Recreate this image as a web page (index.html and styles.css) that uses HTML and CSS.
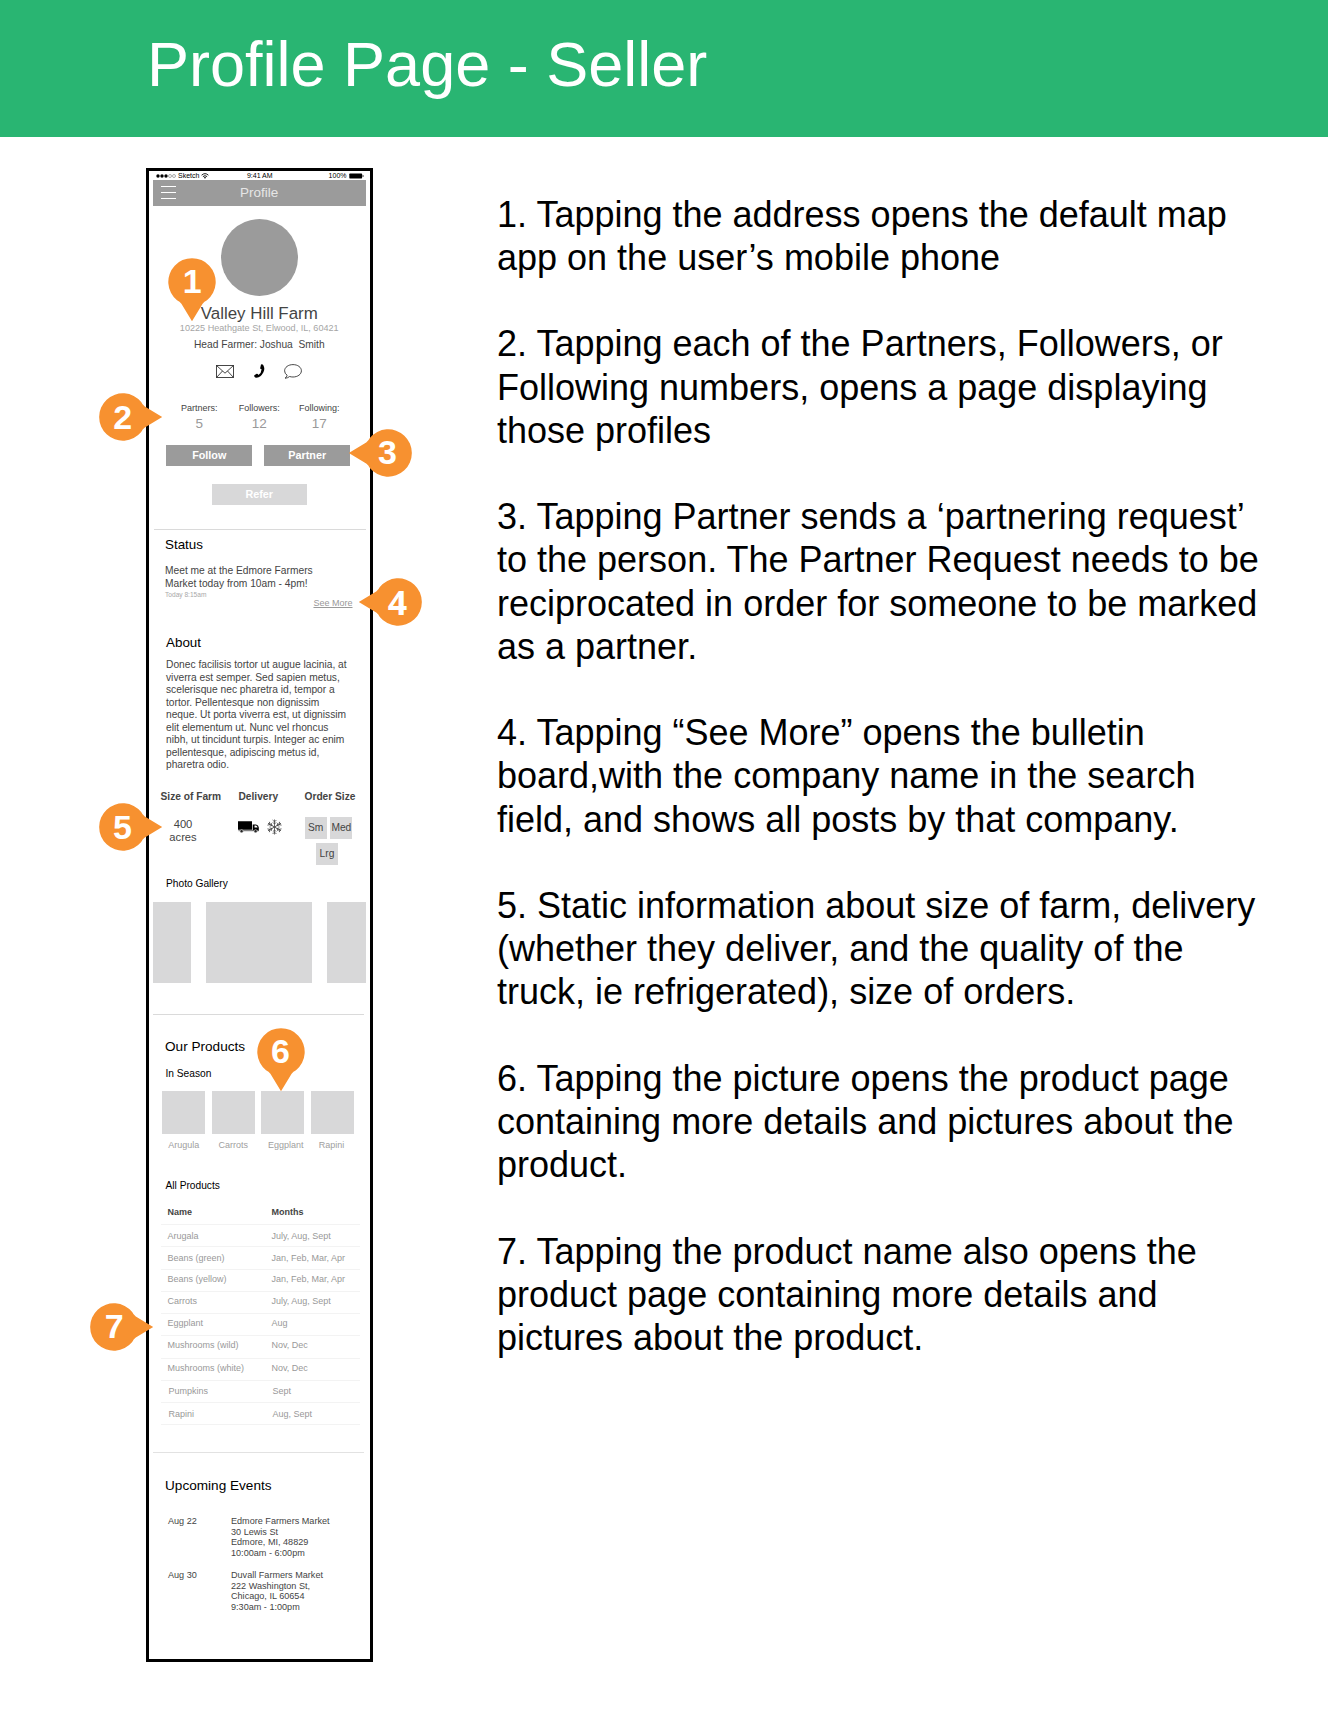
FILE: index.html
```html
<!DOCTYPE html>
<html lang="en">
<head>
<meta charset="utf-8">
<title>Profile Page - Seller</title>
<link rel="stylesheet" href="styles.css">
</head>
<body>
<svg class="defs" width="0" height="0" aria-hidden="true">
  <symbol id="pin" viewBox="-24 -24 48 64">
    <path d="M0 39.2 L-10.6 21.8 Q-12.2 19.4 -15 18.2 A23.7 23.7 0 1 1 15 18.2 Q12.2 19.4 10.6 21.8 Z"/>
  </symbol>
</svg>

<header class="banner"><h1>Profile Page - Seller</h1></header>

<main class="board">
  <section class="phone">
    <div class="statusbar">
      <span class="carrier">
        <svg class="dots" viewBox="0 0 20 4"><circle cx="2" cy="2" r="1.7"/><circle cx="6" cy="2" r="1.7"/><circle cx="10" cy="2" r="1.7"/><g fill="none" stroke="#333" stroke-width=".4"><circle cx="14" cy="2" r="1.5"/><circle cx="18" cy="2" r="1.5"/></g></svg>
        Sketch
        <svg class="wifi" viewBox="0 0 8 6"><path d="M.6 2.2Q4-.9 7.4 2.2M1.9 3.6Q4 1.8 6.1 3.6" fill="none" stroke="#000" stroke-width=".9"/><path d="M2.900 4.500Q4 3.600 5.100 4.500L4 5.700Z"/></svg>
      </span>
      <span>9:41 AM</span>
      <span class="power">100%
        <svg class="battery" viewBox="0 0 15 6"><rect x=".3" y=".6" width="12.800" height="4.800" rx=".6"/><path d="M13.600 2q1 .2 1 1t-1 1z"/></svg>
      </span>
    </div>
    <nav class="navbar">
      <span class="menu"><i></i><i></i><i></i></span>
      <span>Profile</span>
    </nav>

    <div class="profile">
      <div class="avatar"></div>
      <h2 class="farm">Valley Hill Farm</h2>
      <p class="address">10225 Heathgate St, Elwood, IL, 60421</p>
      <p class="farmer">Head Farmer: Joshua&nbsp; Smith</p>
      <div class="contact">
        <svg width="18" height="13" viewBox="0 0 18 13" fill="none" stroke="#333" stroke-width=".9"><rect x=".5" y=".5" width="17" height="12"/><path d="M.5 .5L9 8.2L17.500 .5M.5 12.500L6.500 6M17.500 12.500L11.500 6"/></svg>
        <svg width="11" height="15" viewBox="0 0 11 15"><path d="M7 .6Q8.200 -.1 9.200 .9Q11.400 4.600 9.300 8.500Q6.800 13.200 2.600 13.700Q.9 13.700 .2 12.200Q-.1 11.400 .7 10.900L2.700 9.800Q3.500 9.500 4 10.300L4.400 10.900Q7.400 9 7.600 5.200L6.900 5Q6.100 4.800 6.200 4Z"/></svg>
        <svg width="18" height="15" viewBox="0 0 18 15" fill="none" stroke="#333" stroke-width=".9"><path d="M1 14.200Q2.900 13.200 3.100 11.200Q.6 9.500 .6 6.800C.6 3.300 4.300 .6 9 .6S17.400 3.300 17.400 6.800S13.700 13 9 13Q7.200 13 5.600 12.500Q3.700 14.100 1 14.200Z"/></svg>
      </div>
      <dl class="stats">
        <div><dt>Partners:</dt><dd>5</dd></div>
        <div><dt>Followers:</dt><dd>12</dd></div>
        <div><dt>Following:</dt><dd>17</dd></div>
      </dl>
      <div class="actions"><button>Follow</button><button>Partner</button></div>
      <button class="refer">Refer</button>
    </div>

    <div class="rule"></div>

    <div class="status">
      <h3>Status</h3>
      <p class="post">Meet me at the Edmore Farmers<br>Market today from 10am - 4pm!</p>
      <p class="time">Today 8:15am</p>
      <a class="more">See More</a>
    </div>

    <div class="about">
      <h3>About</h3>
      <p>Donec facilisis tortor ut augue lacinia, at<br>viverra est semper. Sed sapien metus,<br>scelerisque nec pharetra id, tempor a<br>tortor. Pellentesque non dignissim<br>neque. Ut porta viverra est, ut dignissim<br>elit elementum ut. Nunc vel rhoncus<br>nibh, ut tincidunt turpis. Integer ac enim<br>pellentesque, adipiscing metus id,<br>pharetra odio.</p>
    </div>

    <div class="facts">
      <div class="size"><h4>Size of Farm</h4><p>400<br>acres</p></div>
      <div class="delivery"><h4>Delivery</h4>
        <div class="vehicles">
          <svg width="21" height="12" viewBox="0 0 21 12"><path d="M0 .3H14V8.800H0ZM14.700 3.500H18Q20.600 4 20.800 6.500V10H14.700Z"/><path d="M.5 9.200H20.800V10.200H.5Z" fill="#666"/><path d="M16.500 4.600H18Q19.300 5 19.600 6.500H16.500Z" fill="#fff"/><g fill="#222" stroke="#fff" stroke-width=".5"><circle cx="3.600" cy="10.200" r="1.600"/><circle cx="17.600" cy="10.200" r="1.600"/></g></svg>
          <svg width="15" height="16" viewBox="-7.500 -8 15 16" fill="none" stroke="#444" stroke-width=".8"><g id="arm"><path d="M0 0V-7.500M-1.900 -7L0 -5.100L1.900 -7M-1.700 -4.700L0 -3L1.700 -4.700"/></g><use href="#arm" transform="rotate(60)"/><use href="#arm" transform="rotate(120)"/><use href="#arm" transform="rotate(180)"/><use href="#arm" transform="rotate(240)"/><use href="#arm" transform="rotate(300)"/></svg>
        </div>
      </div>
      <div class="orders"><h4>Order Size</h4>
        <div class="sizes"><span>Sm</span><span>Med</span><span>Lrg</span></div>
      </div>
    </div>

    <h4 class="gallery-title">Photo Gallery</h4>
    <div class="gallery"><i></i><i></i><i></i></div>

    <div class="rule rule-left"></div>

    <div class="products">
      <h3>Our Products</h3>
      <h4>In Season</h4>
      <div class="season">
        <figure><i></i><figcaption>Arugula</figcaption></figure>
        <figure><i></i><figcaption>Carrots</figcaption></figure>
        <figure><i></i><figcaption>Eggplant</figcaption></figure>
        <figure><i></i><figcaption>Rapini</figcaption></figure>
      </div>
      <h4 class="all">All Products</h4>
      <div class="table">
        <div class="head"><b>Name</b><b>Months</b></div>
        <div class="row low"><span>Arugala</span><span>July, Aug, Sept</span></div>
        <div class="row low"><span>Beans (green)</span><span>Jan, Feb, Mar, Apr</span></div>
        <div class="row"><span>Beans (yellow)</span><span>Jan, Feb, Mar, Apr</span></div>
        <div class="row"><span>Carrots</span><span>July, Aug, Sept</span></div>
        <div class="row"><span>Eggplant</span><span>Aug</span></div>
        <div class="row"><span>Mushrooms (wild)</span><span>Nov, Dec</span></div>
        <div class="row"><span>Mushrooms (white)</span><span>Nov, Dec</span></div>
        <div class="row inset low"><span>Pumpkins</span><span>Sept</span></div>
        <div class="row inset low"><span>Rapini</span><span>Aug, Sept</span></div>
      </div>
    </div>

    <div class="rule rule-left rule-events"></div>

    <div class="events">
      <h3>Upcoming Events</h3>
      <div class="event"><span>Aug 22</span><p>Edmore Farmers Market<br>30 Lewis St<br>Edmore, MI, 48829<br>10:00am - 6:00pm</p></div>
      <div class="event"><span>Aug 30</span><p>Duvall Farmers Market<br>222 Washington St,<br>Chicago, IL 60654<br>9:30am - 1:00pm</p></div>
    </div>
  </section>

  <section class="notes">
    <p>1. Tapping the address opens the default map<br>app on the user’s mobile phone</p>
    <p>2. Tapping each of the Partners, Followers, or<br>Following numbers, opens a page displaying<br>those profiles</p>
    <p>3. Tapping Partner sends a ‘partnering request’<br>to the person. The Partner Request needs to be<br>reciprocated in order for someone to be marked<br>as a partner.</p>
    <p>4. Tapping “See More” opens the bulletin<br>board,with the company name in the search<br>field, and shows all posts by that company.</p>
    <p>5. Static information about size of farm, delivery<br>(whether they deliver, and the quality of the<br>truck, ie refrigerated), size of orders.</p>
    <p>6. Tapping the picture opens the product page<br>containing more details and pictures about the<br>product.</p>
    <p>7. Tapping the product name also opens the<br>product page containing more details and<br>pictures about the product.</p>
  </section>
</main>

<div class="pin down p1"><svg><use href="#pin"/></svg><b>1</b></div>
<div class="pin right p2"><svg><use href="#pin"/></svg><b>2</b></div>
<div class="pin left p3"><svg><use href="#pin"/></svg><b>3</b></div>
<div class="pin left p4"><svg><use href="#pin"/></svg><b>4</b></div>
<div class="pin right p5"><svg><use href="#pin"/></svg><b>5</b></div>
<div class="pin down p6"><svg><use href="#pin"/></svg><b>6</b></div>
<div class="pin right p7"><svg><use href="#pin"/></svg><b>7</b></div>
</body>
</html>
```
FILE: styles.css
```css
* { box-sizing: border-box; margin: 0; padding: 0; }
body {
  position: relative;
  width: 1328px;
  height: 1713px;
  overflow: hidden;
  background: #fff;
  font-family: "Liberation Sans", Arial, Helvetica, sans-serif;
  color: #444;
}
h1, h2, h3, h4 { font-weight: 400; }
svg { display: block; }
.defs { position: absolute; }

.banner { height: 137px; padding: 26px 0 0 147px; background: #29b572; }
.banner h1 { font-size: 63px; line-height: 76px; color: #fff; }

.board { display: flex; align-items: flex-start; padding: 31px 0 0 146px; }
.phone { width: 226.500px; height: 1494px; border: 3px solid #000; font-size: 10.220px; }

/* phone chrome */
.statusbar {
  display: grid; grid-template-columns: 1fr auto 1fr;
  height: 9px; padding: 0 6px 0 7px; font-size: 7px; line-height: 9px; color: #000;
}
.carrier, .power { display: flex; align-items: center; gap: 2px; }
.power { justify-content: flex-end; }
.dots { width: 20px; height: 4px; }
.wifi { width: 8px; height: 6px; }
.battery { width: 15px; height: 6px; }
.navbar {
  display: grid; grid-template-columns: 1fr auto 1fr;
  height: 25.500px; margin: 0 4px; padding-left: 8px; padding-right: 8px;
  background: #9b9b9b; color: #e6e6e6; font-size: 13.500px; line-height: 25.500px;
}
.menu { display: flex; flex-direction: column; gap: 5px; width: 15px; padding-top: 6px; }
.menu i { height: 1px; background: #fff; }

/* profile */
.profile { display: flex; flex-direction: column; align-items: center; padding-top: 13.500px; }
.avatar { width: 77px; height: 77px; border-radius: 50%; background: #9b9b9b; }
.farm { margin-top: 9px; font-size: 16.900px; line-height: 18px; }
.address { margin-top: -1px; font-size: 9.100px; line-height: 12px; color: #a5a5a5; }
.farmer { margin-top: 5px; line-height: 12px; }
.contact { display: flex; align-items: center; gap: 19.500px; height: 16px; margin-top: 12px; }
.stats { display: grid; grid-template-columns: repeat(3, 60px); margin-top: 23px; text-align: center; }
.stats dt { font-size: 9px; line-height: 12px; }
.stats dd { margin-top: 2px; font-size: 13.500px; line-height: 16px; color: #999; }
button { border: 0; background: #9b9b9b; color: #fff; font: bold 10.800px/21px "Liberation Sans", Arial, sans-serif; height: 21px; }
.actions { display: flex; gap: 12px; margin-top: 13px; margin-right: 2px; }
.actions button { width: 86px; }
.refer { width: 95px; margin-top: 18px; background: #d8d8d9; }

.rule { height: 1px; margin: 24px 4px 0 5px; background: #dadada; }
.rule-left { margin: 31px 6px 0 4px; }
.rule-events { margin-top: 27px; background: #e2e2e2; }

h3 { font-size: 13.400px; line-height: 16px; color: #000; }
h4 { font-size: 10.200px; line-height: 12px; color: #000; }

/* status and about */
.status { display: flex; flex-direction: column; padding: 7px 17px 0 16px; }
.post { margin-top: 12px; line-height: 12.500px; }
.time { margin-top: 1px; font-size: 6.600px; line-height: 7px; color: #a8a8a8; }
.more { align-self: flex-end; font-size: 9px; line-height: 10px; color: #999; text-decoration: underline; }
.about { padding: 27px 0 0 17px; white-space: nowrap; }
.about p { margin-top: 8px; line-height: 12.500px; }

/* farm facts */
.facts { display: grid; grid-template-columns: 78px 66px 52px; height: 93.500px; padding: 19.500px 0 0 11.500px; white-space: nowrap; }
.facts h4 { font-weight: 700; color: #444; }
.size p { width: 45px; margin-top: 15px; text-align: center; font-size: 11.200px; line-height: 13.300px; }
.vehicles { display: flex; align-items: center; gap: 7.500px; margin: 16px 0 0 -.5px; }
.sizes { display: flex; flex-wrap: wrap; justify-content: center; gap: 4.500px 3.700px; width: 48px; margin-top: 13.500px; }
.sizes span { width: 22px; height: 22px; background: #d8d8d9; line-height: 21px; text-align: center; }
.sizes span:last-child { margin-right: 3px; }

.gallery-title { margin: 12.500px 0 0 17px; }
.gallery { display: grid; grid-template-columns: 38px 106px 39px; gap: 15px; height: 81.500px; margin: 12px 0 0 4px; }
.gallery i { background: #d8d8d9; }

/* products */
.products { padding: 24px 0 0 16px; }
.products h3 { font-size: 13.600px; }
.products h4 { margin: 13px 0 0 .5px; }
.season { display: flex; gap: 6.300px; margin: 10.500px 0 0 -3px; }
.season i { display: block; width: 43.300px; height: 43.500px; background: #d8d8d9; }
.season figcaption { margin-top: 5px; font-size: 9px; line-height: 12px; color: #a0a0a0; text-align: center; }
.season figure:nth-child(3) figcaption { padding-left: 6px; }
.season figure:nth-child(4) figcaption { padding-right: 2px; }
.products .all { margin-top: 29px; }
.table { width: 199px; margin: 14px 0 0 -4.500px; border-bottom: 1px solid #f3f3f3; font-size: 9px; color: #999; }
.head, .row { display: grid; grid-template-columns: 104px 1fr; padding-left: 7px; }
.head { height: 18px; line-height: 12px; color: #444; }
.row { height: 22.250px; border-top: 1px solid #f3f3f3; line-height: 19.500px; }
.low { padding-top: 1.500px; }
.inset { padding-left: 8px; }

/* events */
.events { padding: 25px 0 0 16px; }
.events h3 { margin-bottom: 21.500px; font-size: 13.600px; }
.event { display: grid; grid-template-columns: 63px 1fr; margin-bottom: 10.800px; padding-left: 3px; font-size: 9.100px; line-height: 10.800px; }

/* annotations */
.notes { display: flex; flex-direction: column; gap: 43.200px; padding: 24.800px 0 0 124.500px; font-size: 36px; line-height: 43.210px; color: #000; white-space: nowrap; }

/* numbered markers, placed by the centre of their round part */
.pin { position: absolute; width: 0; height: 0; }
.pin svg { position: absolute; left: -24px; top: -24px; width: 48px; height: 64px; fill: #f79130; transform-origin: 24px 24px; }
.pin.right svg { transform: rotate(-90deg); }
.pin.left svg { transform: rotate(90deg); }
.pin b { position: absolute; left: -24px; top: -24.500px; width: 48px; text-align: center; font-size: 34px; line-height: 48px; color: #fff; }
.p1 { left: 192.300px; top: 281.500px; }
.p2 { left: 122.700px; top: 417px; }
.p3 { left: 387.500px; top: 452.500px; }
.p4 { left: 397.500px; top: 602px; }
.p4 b { font-family: "Open Sans", sans-serif; }
.p5 { left: 122.500px; top: 827.300px; }
.p6 { left: 280.500px; top: 1051.500px; }
.p7 { left: 114.300px; top: 1326.700px; }
```
